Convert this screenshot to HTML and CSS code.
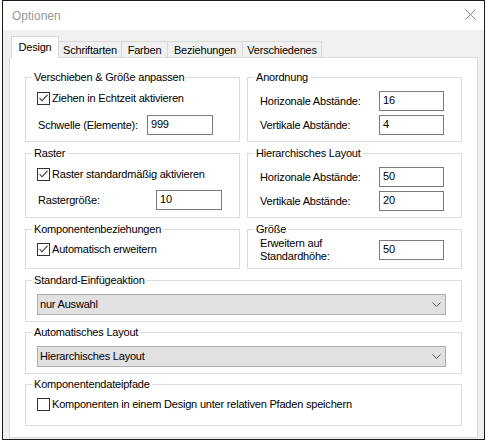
FILE: index.html
```html
<!DOCTYPE html>
<html lang="de">
<head>
<meta charset="utf-8">
<title>Optionen</title>
<link rel="stylesheet" href="styles.css">
</head>
<body>
<div class="window">
  <div class="titlebar">
    <span class="title">Optionen</span>
    <svg class="close" width="11" height="11" viewBox="0 0 11 11"><path d="M0.5 0.5 L10.5 10.5 M10.5 0.5 L0.5 10.5" stroke="#8a8a8a" stroke-width="1" fill="none"/></svg>
  </div>
  <div class="body">
    <div class="tabs">
      <div class="tab tab-active w-design">Design</div>
      <div class="tab w-schrift">Schriftarten</div>
      <div class="tab w-farben">Farben</div>
      <div class="tab w-bez">Beziehungen</div>
      <div class="tab w-versch">Verschiedenes</div>
    </div>
    <div class="panel">
      <div class="pair">
        <div class="group g-big">
          <div class="gtitle">Verschieben &amp; Größe anpassen</div>
          <div class="check-row mt8">
            <span class="cb"><svg width="11" height="11" viewBox="0 0 11 11"><polyline points="1.5,5 4,7.8 9.5,1.8" stroke="#333" stroke-width="1.1" fill="none"/></svg></span>
            <span>Ziehen in Echtzeit aktivieren</span>
          </div>
          <div class="field-row mt10">
            <span class="lbl lbl-schwelle">Schwelle (Elemente):</span>
            <span class="input w66">999</span>
          </div>
        </div>
        <div class="group g-big">
          <div class="gtitle">Anordnung</div>
          <div class="field-row mt7">
            <span class="lbl lbl-right">Horizonale Abstände:</span>
            <span class="input w65">16</span>
          </div>
          <div class="field-row mt4">
            <span class="lbl lbl-right">Vertikale Abstände:</span>
            <span class="input w65">4</span>
          </div>
        </div>
      </div>
      <div class="pair mt11">
        <div class="group g-big">
          <div class="gtitle">Raster</div>
          <div class="check-row mt8">
            <span class="cb"><svg width="11" height="11" viewBox="0 0 11 11"><polyline points="1.5,5 4,7.8 9.5,1.8" stroke="#333" stroke-width="1.1" fill="none"/></svg></span>
            <span>Raster standardmäßig aktivieren</span>
          </div>
          <div class="field-row mt9">
            <span class="lbl lbl-raster">Rastergröße:</span>
            <span class="input w66">10</span>
          </div>
        </div>
        <div class="group g-big">
          <div class="gtitle">Hierarchisches Layout</div>
          <div class="field-row mt7">
            <span class="lbl lbl-right">Horizonale Abstände:</span>
            <span class="input w65">50</span>
          </div>
          <div class="field-row mt4">
            <span class="lbl lbl-right">Vertikale Abstände:</span>
            <span class="input w65">20</span>
          </div>
        </div>
      </div>
      <div class="pair mt11">
        <div class="group g-mid">
          <div class="gtitle">Komponentenbeziehungen</div>
          <div class="check-row mt7">
            <span class="cb"><svg width="11" height="11" viewBox="0 0 11 11"><polyline points="1.5,5 4,7.8 9.5,1.8" stroke="#333" stroke-width="1.1" fill="none"/></svg></span>
            <span>Automatisch erweitern</span>
          </div>
        </div>
        <div class="group g-mid">
          <div class="gtitle">Größe</div>
          <div class="field-row mt4">
            <span class="lbl lbl-right lbl-two">Erweitern auf<br>Standardhöhe:</span>
            <span class="input w65">50</span>
          </div>
        </div>
      </div>
      <div class="group g-sel mt11">
        <div class="gtitle">Standard-Einfügeaktion</div>
        <div class="select">
          <span>nur Auswahl</span>
          <svg width="9" height="5" viewBox="0 0 9 5"><polyline points="0.5,0.5 4.5,4.5 8.5,0.5" stroke="#555" stroke-width="1" fill="none"/></svg>
        </div>
      </div>
      <div class="group g-sel mt10">
        <div class="gtitle">Automatisches Layout</div>
        <div class="select">
          <span>Hierarchisches Layout</span>
          <svg width="9" height="5" viewBox="0 0 9 5"><polyline points="0.5,0.5 4.5,4.5 8.5,0.5" stroke="#555" stroke-width="1" fill="none"/></svg>
        </div>
      </div>
      <div class="group g-sel mt10">
        <div class="gtitle">Komponentendateipfade</div>
        <div class="check-row mt7">
          <span class="cb"></span>
          <span>Komponenten in einem Design unter relativen Pfaden speichern</span>
        </div>
      </div>
    </div>
  </div>
</div>
</body>
</html>
```

FILE: styles.css
```css
* {
  box-sizing: border-box;
  margin: 0;
  padding: 0;
}

body {
  margin: 0;
  background: #ffffff;
  font-family: "Liberation Sans", Arial, sans-serif;
  font-size: 11px;
  line-height: 13px;
  letter-spacing: -0.2px;
  color: #000000;
}

.window {
  margin-left: 2px;
  width: 483px;
  height: 440px;
  border: 1px solid #1b1b1b;
  background: #f0f0f0;
  display: flex;
  flex-direction: column;
}

.titlebar {
  height: 29px;
  background: #ffffff;
  display: flex;
  align-items: flex-start;
  justify-content: space-between;
  padding: 8px 8px 0 9px;
}

.title {
  font-size: 12px;
  line-height: 14px;
  letter-spacing: 0;
  color: #999999;
}

.close {
  display: block;
}

.body {
  flex: 1;
  padding: 6px 6px 1px;
  display: flex;
  flex-direction: column;
}

.tabs {
  display: flex;
  align-items: flex-end;
  height: 21px;
  margin-left: 2px;
}

.tab {
  height: 16px;
  padding-top: 2px;
  border: 1px solid #d9d9d9;
  border-bottom: none;
  background: #f0f0f0;
  text-align: center;
  white-space: nowrap;
  margin-right: -1px;
}

.tab-active {
  height: 22px;
  padding-top: 4px;
  background: #ffffff;
  margin-bottom: -1px;
  position: relative;
  z-index: 1;
}

.w-design { width: 48px; }
.w-schrift { width: 64px; }
.w-farben { width: 47px; }
.w-bez { width: 76px; }
.w-versch { width: 80px; }

.panel {
  height: 381px;
  background: #ffffff;
  border: 1px solid #d9d9d9;
  padding: 19px 15px 0;
}

.pair {
  display: grid;
  grid-template-columns: 215px 215px;
  column-gap: 7px;
}

.group {
  border: 1px solid #dcdcdc;
}

.g-big { height: 65px; }
.g-mid { height: 40px; }
.g-sel { height: 42px; }

.gtitle {
  width: max-content;
  margin: -7px 0 0 6px;
  padding: 0 2px;
  background: #ffffff;
  white-space: nowrap;
}

.mt4 { margin-top: 4px; }
.mt7 { margin-top: 7px; }
.mt8 { margin-top: 8px; }
.mt9 { margin-top: 9px; }
.mt10 { margin-top: 10px; }
.mt11 { margin-top: 11px; }

.check-row {
  display: flex;
  align-items: center;
  height: 13px;
  padding-left: 11px;
  white-space: nowrap;
}

.cb {
  width: 13px;
  height: 13px;
  border: 1px solid #333333;
  background: #ffffff;
  margin-right: 2px;
  display: flex;
  flex-shrink: 0;
}

.cb svg {
  display: block;
}

.field-row {
  display: flex;
  align-items: center;
  height: 20px;
  padding-left: 12px;
}

.lbl {
  white-space: nowrap;
  flex-shrink: 0;
}

.lbl-schwelle { width: 109px; }
.lbl-raster { width: 118px; }
.lbl-right { width: 119px; }

.lbl-two {
  align-self: flex-start;
  margin-top: -3px;
}

.input {
  height: 20px;
  border: 1px solid #7a7a7a;
  background: #ffffff;
  padding: 2px 0 0 3px;
  flex-shrink: 0;
}

.w66 { width: 66px; }
.w65 { width: 65px; }

.select {
  margin: 7px 0 0 11px;
  width: 409px;
  height: 21px;
  background: #e1e1e1;
  border: 1px solid #adadad;
  display: flex;
  align-items: center;
  justify-content: space-between;
  padding: 0 4px 0 2px;
}

.select svg {
  display: block;
}
```
